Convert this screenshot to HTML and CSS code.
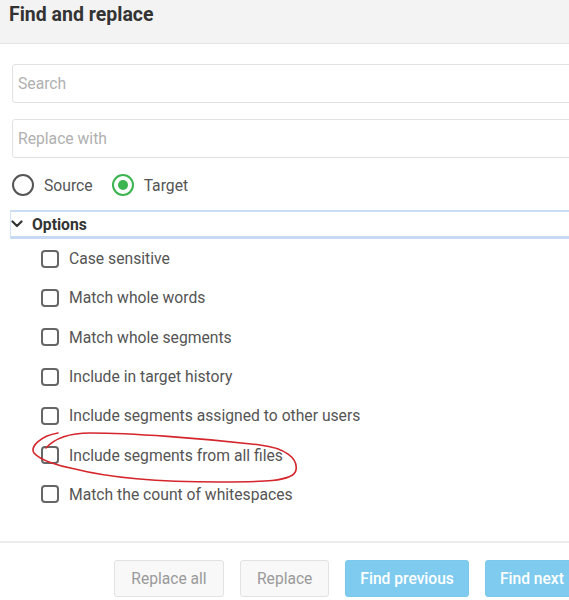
FILE: index.html
```html
<!DOCTYPE html>
<html>
<head>
<meta charset="utf-8">
<link rel="stylesheet" href="styles.css">
</head>
<body>
<div class="dialog">
  <div class="header"><h1 class="title">Find and replace</h1></div>
  <div class="content">
    <div class="field"><span class="placeholder">Search</span></div>
    <div class="field field-second"><span class="placeholder">Replace with</span></div>
    <div class="radios">
      <label class="radio"><span class="circle"></span><span>Source</span></label>
      <label class="radio"><span class="circle checked"><span class="dot"></span></span><span>Target</span></label>
    </div>
    <div class="options-bar">
      <svg class="chevron" width="12" height="8" viewBox="0 0 12 8"><path d="M1.5 1.5 L6 6 L10.5 1.5" fill="none" stroke="#333" stroke-width="2.2" stroke-linecap="round" stroke-linejoin="round"/></svg>
      <span class="options-label">Options</span>
    </div>
    <ul class="checks">
      <li class="check"><span class="box"></span>Case sensitive</li>
      <li class="check"><span class="box"></span>Match whole words</li>
      <li class="check"><span class="box"></span>Match whole segments</li>
      <li class="check"><span class="box"></span>Include in target history</li>
      <li class="check"><span class="box"></span>Include segments assigned to other users</li>
      <li class="check"><span class="box"></span>Include segments from all files</li>
      <li class="check"><span class="box"></span>Match the count of whitespaces</li>
    </ul>
  </div>
  <div class="footer">
    <button class="btn btn-light btn-wide">Replace all</button>
    <button class="btn btn-light">Replace</button>
    <button class="btn btn-blue">Find previous</button>
    <button class="btn btn-blue">Find next</button>
  </div>
  <svg class="annotation" width="569" height="600" viewBox="0 0 569 600">
    <path d="M58 433 C40 436, 30 447, 34 453 C40 460, 58 466, 75 469 C110 478, 160 482, 220 482 C260 482, 294 482, 296 470 C298 458, 285 448, 260 445 C200 438, 130 433, 90 433 C70 433, 55 438, 46 448" fill="none" stroke="#d4262b" stroke-width="1.6" stroke-linecap="round"/>
  </svg>
</div>
</body>
</html>
```
FILE: styles.css
```css
html, body {
  margin: 0;
  padding: 0;
  background: #fff;
  overflow: hidden;
}
body {
  font-family: Roboto, "Noto Sans", Arial, sans-serif;
  color: #444;
}
.dialog {
  position: relative;
  width: 640px;
  height: 600px;
}
.header {
  height: 43px;
  background: #f3f3f3;
  border-bottom: 1px solid #e4e4e4;
  box-sizing: content-box;
}
.title {
  margin: 0;
  padding: 2px 0 0 9px;
  font-size: 19.5px;
  line-height: 26px;
  font-weight: 700;
  color: #333;
}
.content {
  padding: 20px 0 0 10px;
}
.field {
  margin-left: 2px;
  height: 39px;
  box-sizing: border-box;
  border: 1px solid #e2e2e2;
  border-radius: 3px;
  display: flex;
  align-items: center;
  padding-left: 5px;
}
.field-second {
  margin-top: 16px;
}
.placeholder {
  font-size: 15.7px;
  color: #b0b0b0;
}
.radios {
  display: flex;
  gap: 19px;
  margin: 16px 0 0 2px;
  height: 22px;
}
.radio {
  display: flex;
  align-items: center;
  gap: 10px;
  font-size: 15.7px;
  color: #555;
}
.circle {
  width: 22px;
  height: 22px;
  box-sizing: border-box;
  border: 2px solid #555;
  border-radius: 50%;
  display: flex;
  align-items: center;
  justify-content: center;
}
.circle.checked {
  border-color: #3cb44f;
}
.dot {
  width: 10px;
  height: 10px;
  border-radius: 50%;
  background: #3cb44f;
}
.options-bar {
  margin-top: 14px;
  height: 29px;
  box-sizing: border-box;
  border-top: 2px solid #c9ddf3;
  border-bottom: 3px solid #c6dbf3;
  border-left: 1px solid #d3e3f5;
  display: flex;
  align-items: center;
  gap: 9px;
  padding-left: 0;
}
.options-label {
  font-size: 15.7px;
  font-weight: 700;
  color: #333;
}
.checks {
  list-style: none;
  margin: 0;
  padding: 0 0 0 31px;
}
.check {
  height: 39.3px;
  display: flex;
  align-items: center;
  gap: 10px;
  font-size: 15.7px;
  color: #555;
}
.box {
  width: 18px;
  height: 18px;
  box-sizing: border-box;
  border: 2px solid #666;
  border-radius: 4px;
  flex: none;
}
.footer {
  position: absolute;
  top: 541px;
  left: 0;
  right: 0;
  border-top: 2px solid #ececec;
  display: flex;
  gap: 16px;
  padding: 17px 0 0 114px;
}
.btn {
  height: 37px;
  box-sizing: border-box;
  border-radius: 3px;
  font-family: inherit;
  font-size: 15.6px;
  padding: 0 16px;
  cursor: pointer;
}
.btn-light {
  background: #f8f8f8;
  border: 1px solid #e2e2e2;
  color: #9a9a9a;
}
.btn-wide {
  width: 110px;
}
.btn-blue {
  background: #7ecbef;
  border: 1px solid #7ac8ec;
  color: #fff;
  font-weight: 500;
  padding: 0 14px;
}
.annotation {
  position: absolute;
  top: 0;
  left: 0;
  pointer-events: none;
}
```
